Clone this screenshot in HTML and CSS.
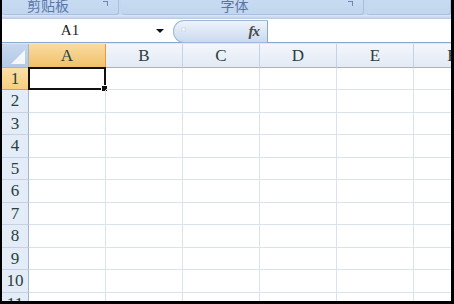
FILE: index.html
```html
<!DOCTYPE html>
<html lang="zh-CN">
<head>
  <meta charset="UTF-8" />
  <title>Book1 - Excel</title>
  <link rel="stylesheet" href="styles.css">
</head>
<body>
  <div class="window">
    <div class="ribbon">
      <div class="group g-clip"><span class="group-label">剪贴板</span><span class="launcher"></span></div>
      <div class="group g-font"><span class="group-label">字体</span><span class="launcher"></span></div>
      <div class="group g-rest"></div>
    </div>
    <div class="band"></div>

    <div class="formula-bar">
      <div class="name-box">
        <span class="name">A1</span>
        <span class="arrow"></span>
      </div>
      <div class="fx-pill">
        <span class="dot"></span>
        <span class="fx">fx</span>
      </div>
      <div class="input"></div>
    </div>
    <div class="gap"></div>

    <div class="sheet" id="sheet"></div>
  </div>

  <script>
    const sheet = document.getElementById("sheet");
    const cols = ["A", "B", "C", "D", "E", "F"];

    // header row
    const corner = document.createElement("div");
    corner.className = "corner";
    sheet.appendChild(corner);
    cols.forEach(c => {
      const h = document.createElement("div");
      h.className = "col-head" + (c === "A" ? " active" : "");
      h.textContent = c;
      sheet.appendChild(h);
    });

    for (let r = 1; r <= 11; r++) {
      const rh = document.createElement("div");
      rh.className = "row-head" + (r === 1 ? " active" : "");
      rh.textContent = r;
      sheet.appendChild(rh);
      cols.forEach(c => {
        const cell = document.createElement("div");
        cell.className = "cell";
        if (r === 1 && c === "A") {
          cell.classList.add("selected");
          const handle = document.createElement("span");
          handle.className = "handle";
          cell.appendChild(handle);
        }
        sheet.appendChild(cell);
      });
    }
  </script>
</body>
</html>
```

FILE: styles.css
```css
body {
  margin: 0;
  background-color: #000;
  font-family: "Liberation Serif", serif;
}

.window {
  margin-left: 2px;
  width: 449px;
  height: 301px;
  overflow: hidden;
  background-color: #fff;
}

/* ribbon strip (only the group labels are visible) */
.ribbon {
  display: flex;
  height: 15px;
  background-color: #c4d8f0;
  overflow: hidden;
}

.group {
  position: relative;
  height: 14px;
  background: linear-gradient(#c7dbf2, #c1d6ef);
  border-right: 1px solid #a8c0de;
  border-bottom: 1px solid #a8c0de;
  border-radius: 0 0 3px 3px;
  margin-right: 3px;
}

.g-clip {
  width: 116px;
  padding-right: 0;
}

.g-clip .group-label {
  margin-right: 24px;
}

.g-font {
  width: 241px;
}

.g-font .group-label {
  margin-right: 16px;
}

.g-rest {
  flex: 1;
  margin-right: 0;
}

.group-label {
  display: block;
  text-align: center;
  font-family: "Noto Sans CJK SC", sans-serif;
  font-size: 14px;
  line-height: 14px;
  margin-top: -2px;
  color: #5a76a9;
}

.launcher {
  position: absolute;
  right: 10px;
  top: 1px;
  width: 4px;
  height: 4px;
  border-right: 1px solid #6c87b6;
  border-top: 1px solid #6c87b6;
}

.band {
  height: 4px;
  background: linear-gradient(#dfe9f6, #b5cae6);
}

/* formula bar */
.formula-bar {
  display: flex;
  height: 23px;
  background-color: #fff;
  border-bottom: 1px solid #8ba8cc;
}

.name-box {
  display: flex;
  align-items: center;
  width: 168px;
}

.name {
  width: 136px;
  text-align: center;
  font-size: 15px;
  color: #222;
}

.arrow {
  margin-left: 18px;
  border-left: 4px solid transparent;
  border-right: 4px solid transparent;
  border-top: 4px solid #111;
}

.fx-pill {
  position: relative;
  display: flex;
  align-items: center;
  justify-content: flex-end;
  width: 93px;
  margin-left: 3px;
  margin-top: 1px;
  height: 21px;
  border: 1px solid #9fb8d8;
  border-right: 1px solid #8aa6cb;
  border-radius: 11px 0 0 11px;
  background: linear-gradient(#eef3fa, #c9daef);
}

.dot {
  position: absolute;
  left: 7px;
  top: 6px;
  width: 5px;
  height: 5px;
  border-radius: 50%;
  background: radial-gradient(#fff, #b8c8dc);
}

.fx {
  font-style: italic;
  font-weight: bold;
  font-size: 15px;
  color: #4a4a4a;
  margin-right: 8px;
  letter-spacing: -1px;
}

.input {
  flex: 1;
}

.gap {
  height: 1px;
  background-color: #dfe7f2;
}

/* grid */
.sheet {
  display: grid;
  grid-template-columns: 27px repeat(6, 77px);
  grid-template-rows: 24px 22px 23px 22px 23px 22px 23px 22px 23px 22px 23px 22px;
}

.corner {
  position: relative;
  box-sizing: border-box;
  background: linear-gradient(#c6d7ee, #b3c9e6);
  border-right: 1px solid #9eb6ce;
  border-bottom: 1px solid #9eb6ce;
}

.corner::after {
  content: "";
  position: absolute;
  right: 3px;
  bottom: 3px;
  border-left: 14px solid transparent;
  border-bottom: 14px solid #f4f8fc;
}

.col-head {
  box-sizing: border-box;
  text-align: center;
  font-size: 17px;
  line-height: 24px;
  color: #27413e;
  background: linear-gradient(#f3f6fb, #e3eaf5);
  border-right: 1px solid #c5d2e3;
  border-bottom: 1px solid #9eb6ce;
}

.row-head {
  box-sizing: border-box;
  text-align: center;
  font-size: 17px;
  line-height: 22px;
  color: #27413e;
  background-color: #e4ecf7;
  border-right: 1px solid #9eb6ce;
  border-bottom: 1px solid #c5d2e3;
}

.col-head.active {
  background: linear-gradient(#f9dba2, #f1c168);
  border-right-color: #f29536;
  border-bottom-color: #f29536;
}

.row-head.active {
  background: linear-gradient(#fbe0a7, #f7ce7f);
  border-right-color: #f29536;
  border-bottom-color: #f29536;
}

.cell {
  position: relative;
  box-sizing: border-box;
  border-right: 1px solid #dae2ed;
  border-bottom: 1px solid #dae2ed;
}

.cell.selected {
  border: 2px solid #111;
  margin: -1px 0 0 -1px;
}

.handle {
  position: absolute;
  right: -4px;
  bottom: -4px;
  width: 5px;
  height: 5px;
  background-color: #111;
  border: 1px solid #fff;
}
```
